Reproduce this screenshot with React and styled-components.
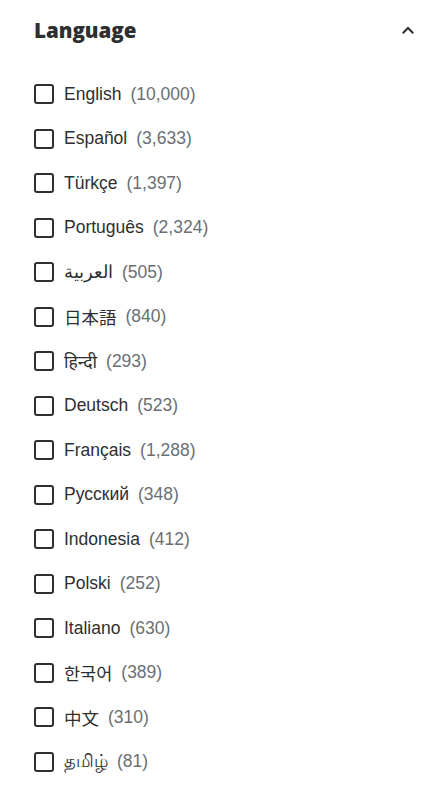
import React from 'react'
import styled, { createGlobalStyle } from 'styled-components'

const GlobalStyle = createGlobalStyle`
body {
  margin: 0;
  background: #ffffff;
  font-family: "Liberation Sans", Arial, "Noto Sans", "Noto Sans CJK JP", sans-serif;
  color: #2d2f31;
}
`

const Panel = styled.section`
width: 434px;
padding: 14px 0 0 34px;
box-sizing: border-box;
`

const Header = styled.div`
display: flex;
align-items: center;
justify-content: space-between;
padding-right: 18px;
height: 32px;
`

const Title = styled.h2`
margin: 0;
font-family: "Open Sans", "Liberation Sans", sans-serif;
font-size: 20.5px;
font-weight: 800;
color: #2d2f31;
`

const Chevron = styled.svg`
width: 16px;
height: 16px;
color: #2d2f31;
`

const List = styled.ul`
list-style: none;
margin: 26px 0 0;
padding: 0;
display: flex;
flex-direction: column;
`

const Row = styled.li`
display: flex;
align-items: center;
height: 44.5px;
`

const Box = styled.span`
width: 20px;
height: 20px;
box-sizing: border-box;
border: 2px solid #2d2f31;
border-radius: 3px;
flex-shrink: 0;
margin-right: 10px;
`

const Label = styled.span`
font-size: 17.5px;
color: #2d2f31;
`

const Count = styled.span`
font-size: 17.5px;
color: #6a6f73;
margin-left: 9px;
`

const languages = [
  ['English', '10,000'],
  ['Español', '3,633'],
  ['Türkçe', '1,397'],
  ['Português', '2,324'],
  ['العربية', '505'],
  ['日本語', '840'],
  ['हिन्दी', '293'],
  ['Deutsch', '523'],
  ['Français', '1,288'],
  ['Русский', '348'],
  ['Indonesia', '412'],
  ['Polski', '252'],
  ['Italiano', '630'],
  ['한국어', '389'],
  ['中文', '310'],
  ['தமிழ்', '81'],
]

export default function App() {
  return (
    <>
      <GlobalStyle />
      <Panel>
        <Header>
          <Title>Language</Title>
          <Chevron viewBox="0 0 16 16" fill="none">
            <path d="M3.5 10.5 L8 6 L12.5 10.5" stroke="currentColor" strokeWidth="2" strokeLinecap="square" />
          </Chevron>
        </Header>
        <List>
          {languages.map(([name, count]) => (
            <Row key={name}>
              <Box />
              <Label>{name}</Label>
              <Count>({count})</Count>
            </Row>
          ))}
        </List>
      </Panel>
    </>
  )
}
